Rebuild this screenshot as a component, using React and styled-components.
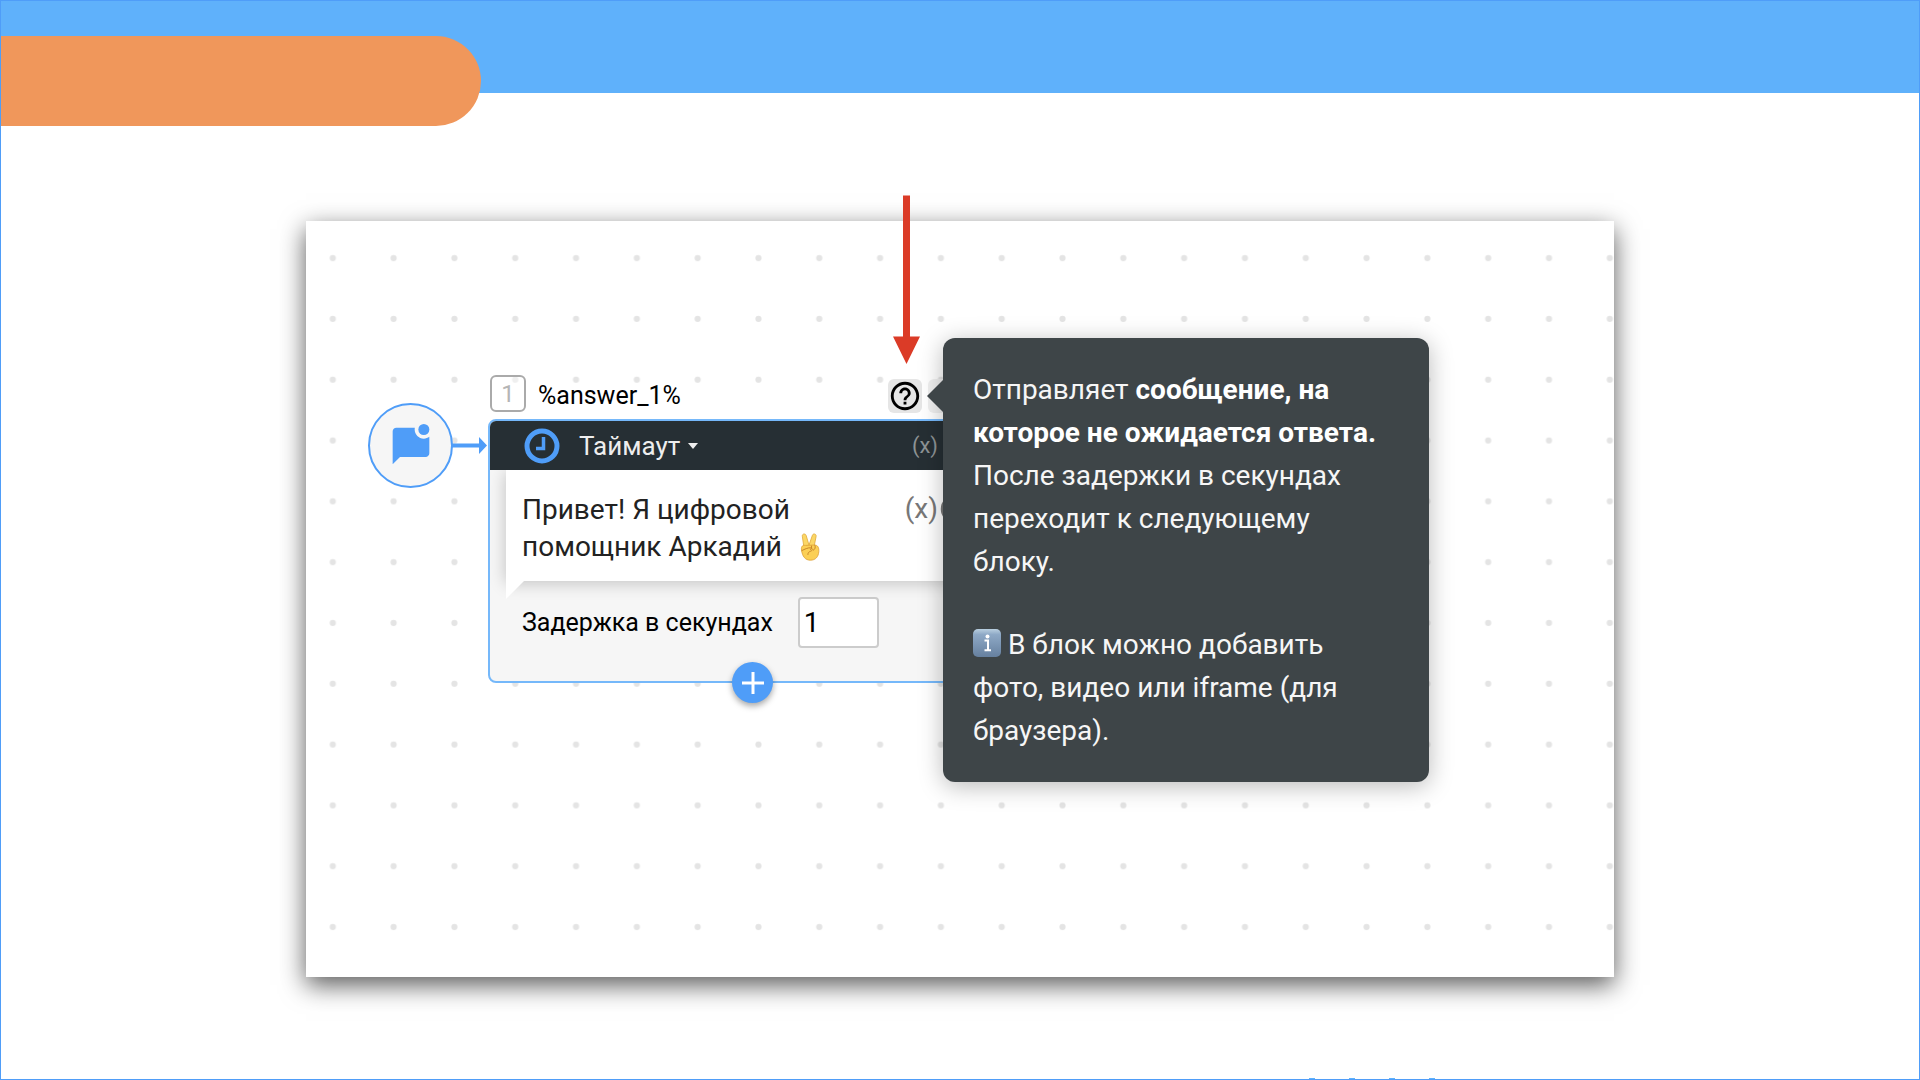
import React from "react";
import styled, { createGlobalStyle } from "styled-components";

const c = {
  blue: "#4f9df8",
  line: "#75b8fa",
  sky: "#5fb1fb",
  orange: "#f0975b",
  dark: "#262f34",
  tip: "#3e4548",
  red: "#db3b27",
};

const GlobalStyle = createGlobalStyle`
  *, *::before, *::after { box-sizing: border-box; }
  body { margin: 0; background: #fff; }
  button, input { font: inherit; color: inherit; letter-spacing: inherit; }
  button { padding: 0; border: 0; background: none; cursor: pointer; }
  p { margin: 0; }
  svg { display: block; }
`;

const Page = styled.div`
  position: relative;
  min-height: 100vh;
  overflow: hidden;
  display: flex;
  flex-direction: column;
  align-items: center;
  border: 1px solid ${c.blue};
  font-family: Roboto, "Noto Sans", sans-serif;
  color: #000;
`;

const TopBar = styled.header`
  position: relative;
  align-self: stretch;
  height: 92px;
  background: ${c.sky};
`;

const TitlePill = styled.div`
  position: absolute;
  top: 35px;
  left: 0;
  width: 25%;
  height: 90px;
  background: ${c.orange};
  border-radius: 0 45px 45px 0;
`;

const Canvas = styled.main`
  position: relative;
  width: 1308px;
  max-width: 100%;
  height: 756px;
  margin-top: 128px;
  background: #fff;
  box-shadow: 0 8px 24px rgba(0, 0, 0, 0.65);
`;

const Dots = styled.svg`
  position: absolute;
  inset: 0;
  width: 100%;
  height: 100%;
`;

const StartNode = styled.div`
  position: absolute;
  left: 62px;
  top: 182px;
  width: 85px;
  height: 85px;
  display: grid;
  place-items: center;
  border: 2px solid ${c.blue};
  border-radius: 50%;
  background: #f6f6f6;
`;

const Connector = styled.svg`
  position: absolute;
  left: 146px;
  top: 215px;
`;

const BlockNode = styled.section`
  position: absolute;
  left: 182px;
  top: 154px;
  width: 528px;
`;

const BlockTop = styled.div`
  display: flex;
  align-items: flex-start;
  gap: 12px;
  height: 44px;
  padding: 0 54px 0 2px;
`;

const Badge = styled.span`
  display: grid;
  place-items: center;
  width: 36px;
  height: 37px;
  border: 2px solid #aaa;
  border-radius: 6px;
  background: rgba(255, 255, 255, 0.4);
  color: #b5b5b5;
  font-size: 24px;
  line-height: 28px;
`;

const VarName = styled.span`
  flex: 1;
  font-size: 25px;
  line-height: 42px;
`;

const Tools = styled.div`
  display: flex;
  gap: 6px;
  padding-top: 4px;
`;

const IconButton = styled.button`
  display: grid;
  place-items: center;
  width: 34px;
  height: 34px;
  border-radius: 6px;
  background: ${(p) => (p.$active ? "#e6e6e6" : "#f0f0f0")};
`;

const Card = styled.div`
  position: relative;
  border: 2px solid ${c.line};
  border-radius: 8px;
  background: #f6f6f6;
`;

const CardHead = styled.div`
  display: flex;
  align-items: center;
  height: 49px;
  padding: 0 76px 0 34px;
  border-radius: 6px 6px 0 0;
  background: ${c.dark};
  color: #eee;
`;

const TypeButton = styled.button`
  display: flex;
  align-items: center;
  gap: 8px;
  margin: 0 auto 0 19px;
  font-size: 26px;
  line-height: 32px;
`;

const VarButton = styled.button`
  color: ${(p) => (p.$onDark ? "#8d9395" : "#777")};
  font-size: ${(p) => (p.$onDark ? "22px" : "28px")};
  line-height: 36px;
`;

const Message = styled.div`
  position: relative;
  display: flex;
  align-items: flex-start;
  justify-content: space-between;
  margin-left: 16px;
  padding: 21px 44px 16px 16px;
  background: #fff;
  box-shadow: 0 2px 16px rgba(0, 0, 0, 0.22);
  clip-path: inset(0 0 -24px -16px);
`;

const MessageText = styled.p`
  width: 308px;
  color: #222;
  font-size: 28px;
  line-height: 37px;
`;

const MessageTools = styled.div`
  display: flex;
  align-items: center;
  gap: 2px;
`;

const Tail = styled.svg`
  position: absolute;
  left: 0;
  top: 100%;
`;

const Inline = styled.svg`
  display: inline-block;
  margin-left: ${(p) => p.$lead || "0"};
  vertical-align: ${(p) => p.$drop};
`;

const Delay = styled.label`
  display: flex;
  align-items: center;
  gap: 25px;
  padding: 16px 32px 33px 32px;
  font-size: 25px;
  line-height: 32px;
`;

const DelayInput = styled.input`
  width: 81px;
  height: 51px;
  padding: 0 4px;
  border: 2px solid #ccc;
  border-radius: 4px;
  outline: 0;
  background: #fff;
  font-size: 28px;
`;

const AddButton = styled.button`
  position: absolute;
  left: calc(50% - 20px);
  bottom: -22px;
  width: 41px;
  height: 41px;
  display: grid;
  place-items: center;
  border-radius: 50%;
  background: ${c.blue};
  box-shadow: 0 3px 6px rgba(0, 0, 0, 0.35);
`;

const Tooltip = styled.aside`
  position: absolute;
  left: 637px;
  top: 117px;
  width: 486px;
  padding: 30px 40px 30px 30px;
  display: flex;
  flex-direction: column;
  gap: 40px;
  border-radius: 12px;
  background: ${c.tip};
  box-shadow: 0 4px 24px rgba(0, 0, 0, 0.28);
  color: #f6f6f6;
  font-size: 28px;
  line-height: 43px;

  &::before {
    content: "";
    position: absolute;
    right: 100%;
    top: 42px;
    border: 16px solid transparent;
    border-left-width: 0;
    border-right-color: ${c.tip};
  }

  strong { color: #fff; font-weight: 700; }
`;

const Pointer = styled.svg`
  position: absolute;
  left: 587px;
  top: -26px;
`;

const PagerDots = styled.div`
  position: absolute;
  right: 484px;
  bottom: 0;
  display: flex;
  gap: 34px;
`;

const PagerDot = styled.i`
  width: 6px;
  height: 1px;
  background: ${c.sky};
`;

const HelpIcon = () => (
  <svg width="34" height="34" viewBox="0 0 24 24" aria-hidden="true">
    <path d="M11 18h2v-2h-2v2zm1-16C6.480 2 2 6.480 2 12s4.480 10 10 10 10-4.480 10-10S17.520 2 12 2zm0 18c-4.410 0-8-3.590-8-8s3.590-8 8-8 8 3.590 8 8-3.590 8-8 8zm0-14c-2.210 0-4 1.790-4 4h2c0-1.100.900-2 2-2s2 .900 2 2c0 2-3 1.750-3 5h2c0-2.250 3-2.500 3-5 0-2.210-1.790-4-4-4z" />
  </svg>
);

const ChatIcon = () => (
  <svg width="44" height="44" viewBox="0 0 24 24" fill={c.blue} aria-hidden="true">
    <path d="M22 6.980V16c0 1.100-.9 2-2 2H6l-4 4V4c0-1.100.9-2 2-2h10.100c-.06.320-.1.660-.1 1 0 2.760 2.240 5 5 5 1.130 0 2.160-.39 3-1.020z" />
    <circle cx="19" cy="3" r="3" />
  </svg>
);

const ClockIcon = () => (
  <svg width="36" height="36" viewBox="0 0 36 36" fill="none" stroke={c.blue} aria-hidden="true">
    <circle cx="18" cy="18" r="15" strokeWidth="5" />
    <path d="M19.500 9v11.500H12" strokeWidth="3.500" />
  </svg>
);

const VictoryHand = () => (
  <Inline $drop="-5px" $lead="10px" width="22" height="28" viewBox="0 0 22 28" role="img" aria-label="✌️">
    <path d="M5 15 3.300 3.200C3 .6 6.600.1 7.200 2.600L10 12l3.400-9.700c.9-2.400 4.300-1.300 3.700 1.200L14.800 15z" fill="#fbd766" stroke="#e0a83a" strokeWidth=".8" />
    <path d="M2.500 17c-.6-4 1.500-5 4-4.600l9-.4c3.400 0 4.600 2.800 4.300 6.500-.4 5.400-3.200 8.700-8.500 8.700-5 0-8-3.800-8.800-10.200z" fill="#fbcf55" stroke="#dda035" strokeWidth=".8" />
    <path d="M3 17.500c2.500-1.200 6-3 8.800-2.700 2.200.4 1.800 2.900-.3 3.500-2 .6-2.600 1.700-2.600 3.200M12.500 13c.4 1.700 0 2.700-1 3.500M16 12.500c.6 2 .2 3.800-1.700 4.700" fill="none" stroke="#c9862a" strokeWidth="1" strokeLinecap="round" />
  </Inline>
);

const InfoEmoji = () => (
  <Inline $drop="-3px" width="28" height="28" viewBox="0 0 28 28" role="img" aria-label="ℹ️">
    <defs>
      <linearGradient id="info" x2="0" y2="1">
        <stop offset="0" stopColor="#b9cfe0" />
        <stop offset=".2" stopColor="#8ea9c6" />
        <stop offset="1" stopColor="#66809f" />
      </linearGradient>
    </defs>
    <rect width="28" height="28" rx="5" fill="url(#info)" />
    <circle cx="14.500" cy="7.500" r="2" fill="#fff" />
    <path d="M11.500 11.500h3.500V21M11.500 21.300h6.500" fill="none" stroke="#fff" strokeWidth="2" />
  </Inline>
);

export default function App() {
  return (
    <Page>
      <GlobalStyle />
      <TopBar>
        <TitlePill />
      </TopBar>
      <Canvas>
        <Dots aria-hidden="true">
          <defs>
            <pattern id="dots" x="-3.600" y="-23.600" width="60.810" height="60.810" patternUnits="userSpaceOnUse">
              <circle cx="30.400" cy="60.600" r="3.100" fill="#e4e4e4" />
              <circle cx="30.400" cy="-.2" r="3.100" fill="#e4e4e4" />
            </pattern>
          </defs>
          <rect width="100%" height="100%" fill="url(#dots)" />
        </Dots>

        <StartNode>
          <ChatIcon />
        </StartNode>

        <BlockNode>
          <BlockTop>
            <Badge>1</Badge>
            <VarName>%answer_1%</VarName>
            <Tools>
              <IconButton type="button" aria-label="Справка" $active>
                <HelpIcon />
              </IconButton>
              <IconButton type="button" aria-label="Меню">
                <svg width="30" height="30" viewBox="0 0 24 24" aria-hidden="true">
                  <path d="M10 4h4v4h-4zM10 10h4v4h-4zM10 16h4v4h-4z" />
                </svg>
              </IconButton>
            </Tools>
          </BlockTop>
          <Card>
            <CardHead>
              <ClockIcon />
              <TypeButton type="button">
                Таймаут
                <svg width="10" height="6" viewBox="0 0 10 6" fill="#eee" aria-hidden="true">
                  <path d="M0 0h10L5 6z" />
                </svg>
              </TypeButton>
              <VarButton type="button" $onDark>(x)</VarButton>
            </CardHead>
            <Message>
              <MessageText>
                Привет! Я цифровой помощник Аркадий <VictoryHand />
              </MessageText>
              <MessageTools>
                <VarButton type="button">(x)</VarButton>
                <button type="button" aria-label="Эмодзи">
                  <svg width="30" height="30" viewBox="0 0 30 30" fill="none" stroke="#777" strokeWidth="2.500" aria-hidden="true">
                    <circle cx="15" cy="15" r="13" />
                    <path d="M9 17q6 7 12 0" />
                  </svg>
                </button>
              </MessageTools>
              <Tail width="18" height="18" viewBox="0 0 18 18" aria-hidden="true">
                <path d="M0 0h18L0 18z" fill="#fff" />
              </Tail>
            </Message>
            <Delay>
              Задержка в секундах
              <DelayInput type="text" inputMode="numeric" defaultValue="1" />
            </Delay>
            <AddButton type="button" aria-label="Добавить">
              <svg width="22" height="22" viewBox="0 0 22 22" stroke="#fff" strokeWidth="3" aria-hidden="true">
                <path d="M11 0v22M0 11h22" />
              </svg>
            </AddButton>
          </Card>
        </BlockNode>

        <Connector width="36" height="20" viewBox="0 0 36 20" fill={c.blue} aria-hidden="true">
          <path d="M0 7.500h27V1l8 8.500-8 8.500v-6.500H0z" />
        </Connector>

        <Tooltip role="tooltip">
          <p>
            Отправляет <strong>сообщение, на которое не ожидается ответа.</strong> После задержки
            в секундах переходит к следующему блоку.
          </p>
          <p>
            <InfoEmoji /> В блок можно добавить фото, видео или iframe (для браузера).
          </p>
        </Tooltip>

        <Pointer width="28" height="170" viewBox="0 0 28 170" fill={c.red} aria-hidden="true">
          <path d="M10 .5h7v141h10L13.500 169 0 141.500h10z" />
        </Pointer>
      </Canvas>
      <PagerDots aria-hidden="true">
        <PagerDot />
        <PagerDot />
        <PagerDot />
        <PagerDot />
      </PagerDots>
    </Page>
  );
}
